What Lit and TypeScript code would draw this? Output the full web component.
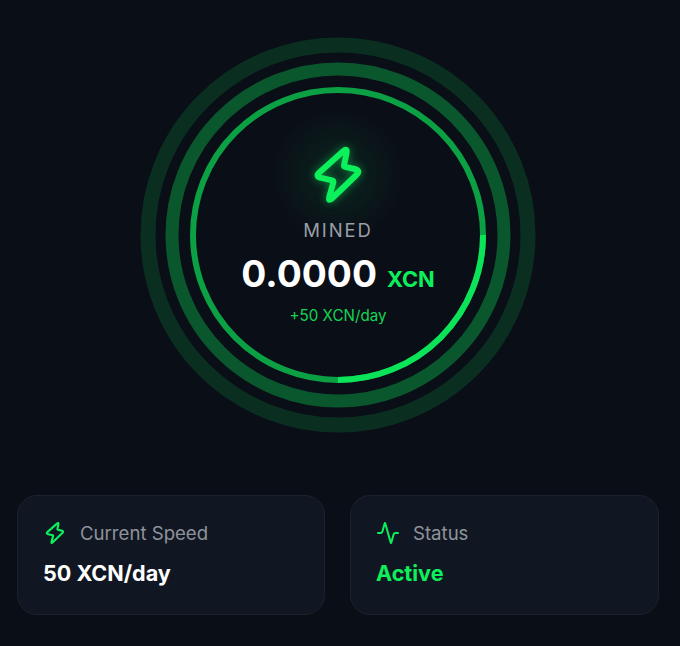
import { LitElement, html, css, svg } from 'lit';
import { customElement } from 'lit/decorators.js';

const CX = 200;
const CY = 200;
const GREEN = '#0cf05c';

// clockwise arc starting at 3 o'clock, sweep in degrees
function arcPath(r: number, sweep: number) {
  const a = (sweep * Math.PI) / 180;
  const x = CX + r * Math.cos(a);
  const y = CY + r * Math.sin(a);
  return `M ${CX + r} ${CY} A ${r} ${r} 0 ${sweep > 180 ? 1 : 0} 1 ${x} ${y}`;
}

// polygon with its corners rounded by quadratic curves
function roundedPoly(points: number[][], radius: number[]) {
  let d = '';
  points.forEach((p, i) => {
    const prev = points[(i + points.length - 1) % points.length];
    const next = points[(i + 1) % points.length];
    const toward = (q: number[]) => {
      const len = Math.hypot(q[0] - p[0], q[1] - p[1]);
      const t = radius[i] / len;
      return [p[0] + (q[0] - p[0]) * t, p[1] + (q[1] - p[1]) * t];
    };
    const a = toward(prev);
    const b = toward(next);
    d += `${i ? 'L' : 'M'}${a[0].toFixed(2)} ${a[1].toFixed(2)} Q${p[0]} ${p[1]} ${b[0].toFixed(2)} ${b[1].toFixed(2)} `;
  });
  return d + 'Z';
}

const BOLT = roundedPoly(
  [[15.9, 0.9], [2.7, 12.6], [10.3, 14.3], [7.9, 23.0], [21.2, 10.2], [14.3, 8.6]],
  [2.6, 2.6, 0.6, 2.6, 2.6, 0.6],
);

const zap = (size: number, width: number) => html`
  <svg width=${size} height=${size} viewBox="0 0 24 24" fill="none" stroke=${GREEN} stroke-width=${width} stroke-linecap="round" stroke-linejoin="round">
    <path d=${BOLT} />
  </svg>
`;

const activity = html`
  <svg width="24" height="24" viewBox="0 0 24 24" fill="none" stroke=${GREEN} stroke-width="2" stroke-linecap="round" stroke-linejoin="round">
    <path d="M22 12h-2.48a2 2 0 0 0-1.93 1.46l-2.35 8.36a.25.25 0 0 1-.48 0L9.24 2.18a.25.25 0 0 0-.48 0l-2.35 8.36A2 2 0 0 1 4.49 12H2" />
  </svg>
`;

@customElement('app-root')
export class AppRoot extends LitElement {
  static styles = css`
    :host {
      display: block;
      width: 680px;
      height: 646px;
      background: #0a0e17;
      font-family: Inter, "Liberation Sans", sans-serif;
      overflow: hidden;
    }
    .page {
      width: 676px;
      box-sizing: border-box;
      padding: 35px 17px 0;
      display: flex;
      flex-direction: column;
      align-items: center;
    }
    .gauge {
      position: relative;
      width: 400px;
      height: 400px;
      margin-bottom: 60px;
    }
    .rings {
      position: absolute;
      inset: 0;
    }
    .center {
      position: relative;
      height: 100%;
      display: flex;
      flex-direction: column;
      align-items: center;
      padding-top: 110px;
      box-sizing: border-box;
    }
    .glow {
      position: absolute;
      left: 130px;
      top: 70px;
      width: 140px;
      height: 140px;
      border-radius: 50%;
      background: radial-gradient(circle, rgba(12, 240, 92, 0.1) 0%, rgba(12, 240, 92, 0.035) 45%, rgba(12, 240, 92, 0) 70%);
    }
    .bolt {
      position: relative;
      display: block;
      height: 60px;
      filter: drop-shadow(0 0 4px rgba(12, 240, 92, 0.5));
    }
    .label {
      margin-top: 13px;
      font-size: 18.5px;
      line-height: 24px;
      letter-spacing: 1.9px;
      color: #9b9fa6;
    }
    .amount {
      display: flex;
      align-items: baseline;
      gap: 10px;
      margin-top: 8px;
    }
    .value {
      font-size: 37.2px;
      line-height: 48px;
      font-weight: 700;
      color: #fff;
    }
    .unit {
      font-size: 21.8px;
      font-weight: 700;
      color: #0cf05c;
    }
    .rate {
      margin-top: 8px;
      font-size: 15.2px;
      line-height: 20px;
      color: #14d653;
    }
    .cards {
      width: 100%;
      display: grid;
      grid-template-columns: 308px 309px;
      gap: 25px;
    }
    .card {
      height: 120px;
      box-sizing: border-box;
      padding: 25px;
      background: #111722;
      border: 1px solid #1c222c;
      border-radius: 20px;
    }
    .head {
      display: flex;
      align-items: center;
      gap: 13px;
      height: 24px;
      font-size: 18.6px;
      color: #8f939b;
    }
    .big {
      margin-top: 14px;
      font-size: 21.6px;
      line-height: 28px;
      font-weight: 700;
      color: #fff;
    }
    .big.on {
      color: #0cf05c;
    }
  `;

  render() {
    return html`
      <div class="page">
        <div class="gauge">
          <svg class="rings" width="400" height="400" viewBox="0 0 400 400" fill="none">
            ${svg`
              <circle cx=${CX} cy=${CY} r="190" stroke=${GREEN} stroke-opacity="0.15" stroke-width="15" />
              <circle cx=${CX} cy=${CY} r="166" stroke=${GREEN} stroke-opacity="0.32" stroke-width="13" />
              <circle cx=${CX} cy=${CY} r="145" stroke=${GREEN} stroke-opacity="0.65" stroke-width="6" />
              <path d=${arcPath(145, 90)} stroke=${GREEN} stroke-opacity="0.85" stroke-width="6" />
            `}
          </svg>
          <div class="glow"></div>
          <div class="center">
            <span class="bolt">${zap(60, 2.4)}</span>
            <div class="label">MINED</div>
            <div class="amount">
              <span class="value">0.0000</span>
              <span class="unit">XCN</span>
            </div>
            <div class="rate">+50 XCN/day</div>
          </div>
        </div>
        <div class="cards">
          <div class="card">
            <div class="head">${zap(24, 2.1)}<span>Current Speed</span></div>
            <div class="big">50 XCN/day</div>
          </div>
          <div class="card">
            <div class="head">${activity}<span>Status</span></div>
            <div class="big on">Active</div>
          </div>
        </div>
      </div>
    `;
  }
}
